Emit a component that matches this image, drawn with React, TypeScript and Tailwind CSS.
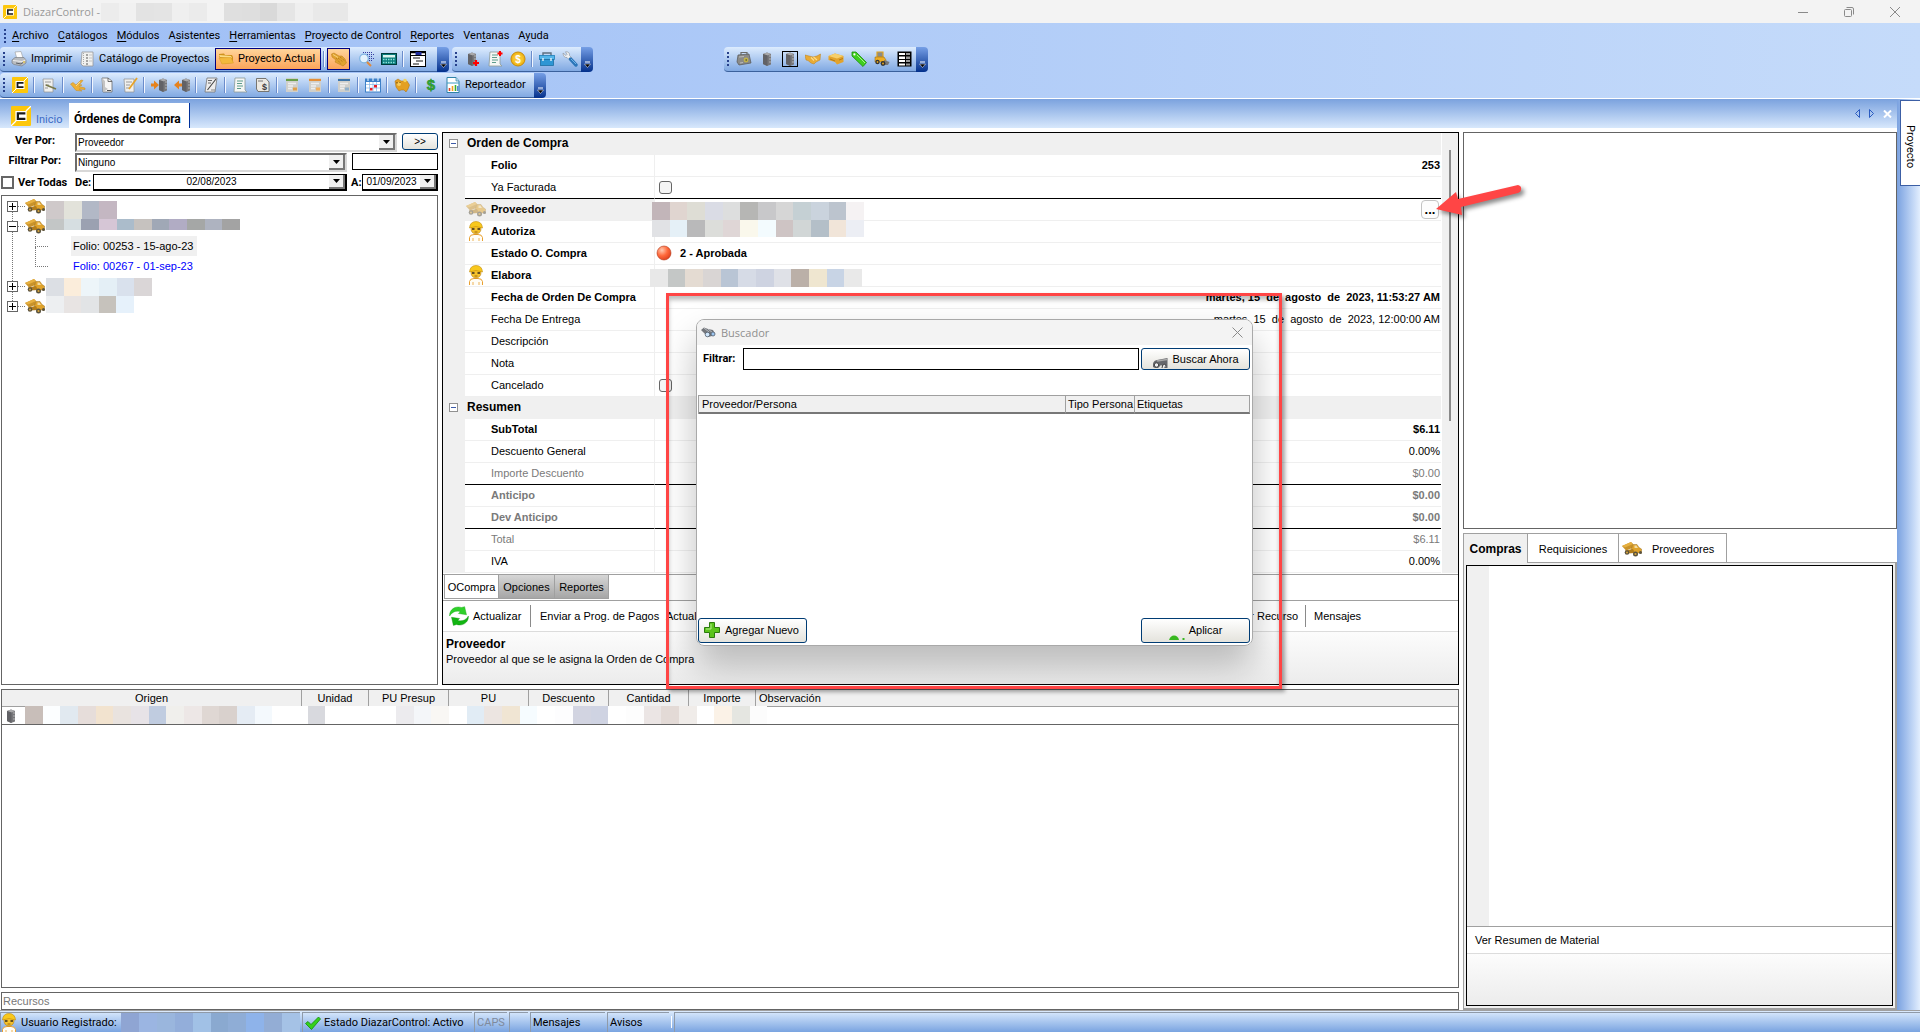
import type { ReactNode } from "react";
import clsx from "clsx";

// ---------- icons ----------

const Svg = ({ size = 16, children }: { size?: number; children: ReactNode }) => (
  <svg width={size} height={size} viewBox="0 0 16 16" className="shrink-0" aria-hidden="true">
    {children}
  </svg>
);

const Logo = ({ size = 16 }: { size?: number }) => (
  <Svg size={size}>
    <rect width="16" height="16" rx="1" fill="#fdc70c" />
    <path d="M0 16 L4 12 M12 4 L16 0" stroke="#fff" strokeWidth="1" />
    <rect x="3.5" y="4" width="9" height="8" fill="#fff" />
    <path d="M11.5 5.8 H5.5 V10.2 H11.5" fill="none" stroke="#1a1a1a" strokeWidth="1.8" />
  </Svg>
);

const Printer = () => (
  <Svg>
    <path d="M4 1 L10 0.5 L12 7 L6 8 Z" fill="#fdfdfd" stroke="#999" strokeWidth="0.6" />
    <path d="M1 9 L4 6.5 L13 6.5 L15 9 V12 L11 15 L3 13.5 L1 12 Z" fill="#b9bcc0" stroke="#7b7f85" strokeWidth="0.7" />
    <path d="M2 9.5 L11 10.5 L14.5 9" stroke="#eee" fill="none" />
    <path d="M5 12 L10 13 L12 11.5" stroke="#5d6167" fill="none" />
    <circle cx="13" cy="11" r="0.9" fill="#e8c64a" />
  </Svg>
);

const Notebook = () => (
  <Svg>
    <path d="M3 1 H14 V15 H4 L2 13 Z" fill="#f1f1ef" stroke="#98989a" strokeWidth="0.8" />
    <path d="M4.5 2 V14" stroke="#aaa" strokeDasharray="1 1" />
    <path d="M7 4 H9 M7 7 H9 M7 10 H9 M7 13 H9" stroke="#8a8a8a" strokeWidth="1.3" />
    <path d="M10 4 H13 M10 7 H13 M10 10 H13" stroke="#c3c3c3" />
  </Svg>
);

const Folder = () => (
  <Svg>
    <path d="M1 3 L6 2.5 L7 4 L14 4 L15 6 V12 L4 13 L1 5 Z" fill="#d0921d" />
    <path d="M1 4 L13 5 L14 7 L2 6 Z" fill="#fbdc84" />
    <path d="M1 7 L13 6.5 L15.5 12 L4 13 Z" fill="#f3b93c" stroke="#dd9f2b" strokeWidth="0.5" />
  </Svg>
);

const Glove = () => (
  <Svg>
    <path d="M0.5 3 L3 2 L8 5 L11 5 L14 8 L15.5 12 L12 15 L8 13 L4 11 L5 9 L1 6 Z" fill="#e0a230" stroke="#b77a16" strokeWidth="0.5" />
    <path d="M7 7 L12 11 M9 6 L14 10 M5 7 L10 13" stroke="#a96f14" strokeWidth="0.9" strokeDasharray="1 1" />
    <path d="M2 3.5 L7 6.5" stroke="#f8d27c" strokeWidth="1" />
  </Svg>
);

const Finder = () => (
  <Svg>
    <path d="M5 1.5 H15 M7 3.5 H16 M9 5.5 H15 M11 7.5 H16 M11 9.5 H14" stroke="#343aa0" strokeWidth="1.1" strokeDasharray="1 1" />
    <circle cx="6" cy="7.5" r="4.3" fill="#e4f2fd" stroke="#7fb4e2" strokeWidth="1.2" />
    <path d="M9 11 L13 15" stroke="#e08a3c" strokeWidth="2" />
  </Svg>
);

const Calc = () => (
  <Svg>
    <rect x="0.5" y="2.5" width="15" height="11" fill="#0a7d7d" stroke="#003c3c" />
    <rect x="2" y="4" width="12" height="2.5" fill="#d9f5ee" />
    <path d="M2 8.5 H14 M2 11.5 H14" stroke="#8de0d8" strokeWidth="1.4" strokeDasharray="1.5 1" />
  </Svg>
);

const PanelIcon = () => (
  <Svg>
    <rect x="0.5" y="0.5" width="15" height="15" fill="#fff" stroke="#000" />
    <path d="M1 1.500 H15" stroke="#000" strokeWidth="1.5" />
    <rect x="5.500" y="1" width="6" height="3" fill="#1d2a9a" />
    <path d="M0.500 4.500 H15.500" stroke="#000" strokeWidth="1" />
    <path d="M3 7 H10 M6 10 H13 M3 13 H9" stroke="#888" strokeWidth="1.800" />
  </Svg>
);

const rockShape = (
  <>
    <path d="M4 3 L8 1.5 L12 3 V13.5 L8 15 L4 13 Z" fill="#77777a" />
    <path d="M4 3 L8 1.5 L12 3 L8.5 4.5 Z" fill="#a9a9ab" />
    <path d="M4 3 L8.5 4.5 V15 L4 13 Z" fill="#626266" />
    <path d="M10 5 H12 M10 8 H12 M10 11 H12" stroke="#b5b5b5" strokeWidth="1.2" />
  </>
);

const Rock = () => <Svg>{rockShape}</Svg>;

const RockAdd = () => (
  <Svg>
    {rockShape}
    <path d="M12 9 V15 M9 12 H15" stroke="#f00" strokeWidth="2.2" />
  </Svg>
);

const RockBoxed = () => (
  <Svg>
    <rect x="0.5" y="0.5" width="15" height="15" fill="none" stroke="#000" />
    {rockShape}
  </Svg>
);

const RockIn = () => (
  <Svg>
    <g transform="translate(4 0)">{rockShape}</g>
    <path d="M0 6.5 H3 V3.5 L8 8 L3 12.5 V9.5 H0 Z" fill="#e5821e" />
  </Svg>
);

const RockOut = () => (
  <Svg>
    <g transform="translate(4 0)">{rockShape}</g>
    <path d="M8 6.5 H5 V3.5 L0 8 L5 12.5 V9.5 H8 Z" fill="#e5821e" />
  </Svg>
);

const Receipt = ({ mark }: { mark?: boolean }) => (
  <Svg>
    <path d="M3 1 H13 V13 L15 15 H2 Z" fill="#f5f6f4" stroke="#8d9a98" strokeWidth="0.8" />
    <path d="M5 4 H11 M5 6.5 H10 M5 9 H11 M5 11.5 H9" stroke="#5d9c8c" />
    {mark && <path d="M13 0 V5 M10.5 2.5 H15.5" stroke="#f00" strokeWidth="2" />}
  </Svg>
);

const Coin = () => (
  <Svg>
    <circle cx="8" cy="8" r="7" fill="#f2b91b" stroke="#c98a07" />
    <circle cx="8" cy="8" r="5" fill="#f7c530" />
    <text x="8" y="11.5" textAnchor="middle" fontSize="10" fontWeight="700" fill="#fff" fontFamily="Liberation Sans, sans-serif">$</text>
  </Svg>
);

const Toolbox = () => (
  <Svg>
    <path d="M4 5 V2 H12 V5" fill="none" stroke="#5d6f80" strokeWidth="1.4" />
    <rect x="0.5" y="4.5" width="15" height="4" fill="#54b5ea" stroke="#1f7fb8" strokeWidth="0.8" />
    <rect x="1.5" y="8.5" width="13" height="6" fill="#2e96d4" stroke="#1f6fa3" strokeWidth="0.8" />
    <path d="M4 7 V10 M12 7 V10" stroke="#e4f3fb" strokeWidth="1.4" />
  </Svg>
);

const Wrench = () => (
  <Svg>
    <path d="M1 2 L4 4.5 L5 3.5 L3.5 0.8 C6 0.3 8 2 7.5 4.5 L10 7 L7.5 9 L5 6.5 C3 7 1 5 1 2 Z" fill="#eef0f2" stroke="#8a8f96" strokeWidth="0.6" />
    <path d="M8.5 8 L14 14" stroke="#2b76b9" strokeWidth="3.4" strokeLinecap="round" />
    <path d="M9 8 L14 13" stroke="#71b2e6" strokeWidth="1" />
  </Svg>
);

const Bag = () => (
  <Svg>
    <path d="M5 4 V1.5 H11 V4" fill="none" stroke="#6b6b68" strokeWidth="1.2" />
    <path d="M2 4 L13 3 L15 12 L3 14 L1 11 Z" fill="#8b8b87" stroke="#555" strokeWidth="0.7" />
    <path d="M3 6 L8 5.5 M4 12 L7 11.5" stroke="#bbb" />
    <circle cx="10" cy="9" r="2.4" fill="#c2b34a" />
    <path d="M9.5 9 H11" stroke="#333" />
  </Svg>
);

const Handshake = () => (
  <Svg>
    <path d="M0 4 L4 5 L8 6 L12 5 L15.5 3 L15 9 L11 11 L9 13 L6 12 L3 9.5 L1 9 Z" fill="#e9ab35" stroke="#bd7f18" strokeWidth="0.5" />
    <path d="M6 6.5 L9 9.5 M8.5 6 L12 9" stroke="#fbdc8c" strokeWidth="1.1" />
  </Svg>
);

const Box = () => (
  <Svg>
    <path d="M0.5 5 L7 2.5 L15.5 5 V11 L9 13.5 L7 11 L0.5 9 Z" fill="#e3a32c" />
    <path d="M0.5 5 L7 2.5 L15.5 5 L9 7.5 Z" fill="#f6cf6c" />
    <path d="M2 8 L7 10 M11 9 L15 7.5" stroke="#a96f10" strokeWidth="0.8" />
  </Svg>
);

const Tag = () => (
  <Svg>
    <path d="M1 1 H5 L15.5 11.5 L12 15.5 L1 5 Z" fill="#3fcf1f" stroke="#1c8a0c" strokeWidth="0.8" />
    <circle cx="3.4" cy="3.4" r="1.1" fill="#fff" />
    <path d="M6 4 L14 12" stroke="#a7f28f" />
  </Svg>
);

const Loader = () => (
  <Svg>
    <path d="M3 1 H9 V6 H3 Z" fill="#8b8b86" stroke="#e2a41e" strokeWidth="1.2" />
    <path d="M1 6 H10 L12 9 V11 H1 Z" fill="#eead23" stroke="#8f6510" strokeWidth="0.5" />
    <path d="M10 9 L15.5 11 L14 14 H10" fill="#777" />
    <circle cx="3.5" cy="11" r="2.2" fill="#333" />
    <circle cx="3.5" cy="11" r="0.9" fill="#e2a41e" />
    <circle cx="9" cy="12.5" r="2.4" fill="#333" />
    <circle cx="9" cy="12.5" r="1" fill="#e2a41e" />
  </Svg>
);

const Sheet = () => (
  <Svg>
    <rect x="0.5" y="0.5" width="14" height="15" fill="#000" />
    <path d="M2 2 H8 V4 H2 Z M2 5.5 H8 V8 H2 Z M2 9 H8 V11 H2 Z M2 12.5 H8 V14.5 H2 Z" fill="#fff" />
    <path d="M9 2 H13 V4 H9 Z M9 5.5 H13 V8 H9 Z M9 9 H13 V11 H9 Z M9 12.5 H13 V14.5 H9 Z" fill="#999" />
  </Svg>
);

const NotePencil = ({ gold }: { gold?: boolean }) => (
  <Svg>
    <path d="M2 2 H12 V15 H3 Z" fill="#f0f0ee" stroke="#8f8f8f" strokeWidth="0.7" />
    <path d="M4 5 H10 M4 8 H8 M4 11 H7" stroke="#9a9a9a" />
    <path d={gold ? "M15 1 L7 12" : "M5 8 L15 12"} stroke={gold ? "#e5a32a" : "#77784a"} strokeWidth="1.8" />
  </Svg>
);

const Hand = () => (
  <Svg>
    <path d="M0.500 7 L3 5.500 L6 8 L11 3 L13 3.500 L9.500 7.500 L12 8 L9 9.500 L15 11 L15 12.500 L9 12 L12 14 L6 13.500 L4 11 Z" fill="#eeb036" stroke="#c98a1c" strokeWidth="0.500" />
    <path d="M6 9 L10 5" stroke="#fbdc8c" />
  </Svg>
);

const Page = () => (
  <Svg>
    <path d="M3 1 H9 L13 4 V15 H4 Z" fill="#f6f6f6" stroke="#6c6c6c" strokeWidth="0.8" />
    <path d="M3 1 L6 4 V10 L9 12 L4 15 Z" fill="#c4c4c4" />
    <path d="M9 1 V4.500 H13" stroke="#555" strokeWidth="0.800" fill="none" />
    <path d="M8 13.500 H12" stroke="#555" />
  </Svg>
);

const Pad = () => (
  <Svg>
    <path d="M4 1 H14 L12 15 H2 Z" fill="#ececec" stroke="#777" strokeWidth="0.8" />
    <path d="M5 3.5 H9 M5 6 H8" stroke="#666" />
    <path d="M13 2 L6 11 L4.5 13" stroke="#444" strokeWidth="1.1" fill="none" />
    <path d="M8 13 H12" stroke="#888" />
  </Svg>
);

const Invoice = () => (
  <Svg>
    <path d="M1.5 1.5 H11 L14 5 V14.5 H3 L1.5 12 Z" fill="#ece9e2" stroke="#6d6a63" strokeWidth="0.9" />
    <path d="M3 4 H8" stroke="#777" />
    <text x="9.5" y="13" textAnchor="middle" fontSize="9" fontWeight="700" fill="#3c3c3c" fontFamily="Liberation Sans, sans-serif">$</text>
  </Svg>
);

const Report = ({ head, spot }: { head: string; spot: string }) => (
  <Svg>
    <path d="M2 1 H14 V15 H2 Z" fill="#cfcfcb" />
    <path d="M2 3 H14" stroke={head} strokeWidth="1.8" />
    <path d="M4 6.5 H12 M4 9 H9 M4 11.5 H8" stroke="#eee" strokeWidth="1.3" />
    <path d="M9 12 H13" stroke={spot} strokeWidth="3" />
  </Svg>
);

const Calendar = () => (
  <Svg>
    <rect x="0.5" y="2" width="15" height="13" fill="#fff" stroke="#3c80c8" />
    <path d="M1 3.5 H15" stroke="#3c80c8" strokeWidth="3" />
    <path d="M3 0.5 V4 M8 0.5 V4 M13 0.5 V4" stroke="#d8e8f8" strokeWidth="1.2" />
    <path d="M1 7.5 H15 M1 11 H15 M4.5 5 V15 M8 5 V15 M11.5 5 V15" stroke="#86b6e6" strokeWidth="0.7" />
    <path d="M9 8 H12 V10.5 H9 Z M5 11 H7.5 V13.5 H5 Z" fill="#e8202a" />
  </Svg>
);

const Piggy = () => (
  <Svg>
    <path d="M1 4 L4 2 L7 4 L13 4 L15.5 8 L14 12 L12 15 L10 13 L7 13 L5 14 L2 10 Z" fill="#e3a022" stroke="#aa6f0c" strokeWidth="0.5" />
    <circle cx="5" cy="7" r="2" fill="#f6cb5c" />
    <circle cx="11" cy="3.5" r="1.8" fill="#f4d25a" />
    <path d="M3 5 V6.5 M6 5 V6" stroke="#6d4505" />
  </Svg>
);

const Dollar = () => (
  <Svg>
    <text x="8" y="13" textAnchor="middle" fontSize="15" fontWeight="700" fill="#34a832" stroke="#1f8a26" strokeWidth="0.5" fontFamily="Liberation Sans, sans-serif">$</text>
  </Svg>
);

const ChartDoc = () => (
  <Svg>
    <path d="M2 0.5 H11 L14 4 V15.5 H2 Z" fill="#fff" stroke="#2f83a8" />
    <path d="M11 0.5 V4 H14" fill="#bfe0ee" stroke="#2f83a8" strokeWidth="0.7" />
    <path d="M2 6 H14" stroke="#3a9ac4" />
    <path d="M4.5 11 V14" stroke="#e04020" strokeWidth="1.6" />
    <path d="M7.500 9 V14" stroke="#f0a020" strokeWidth="1.6" />
    <path d="M10.500 8 V14" stroke="#36b030" strokeWidth="1.6" />
    <path d="M12.800 9 V14" stroke="#3070d0" strokeWidth="1.2" />
  </Svg>
);

const Truck = ({ faded }: { faded?: boolean }) => (
  <svg width="20" height="16" viewBox="0 0 20 16" className={clsx("shrink-0", faded && "opacity-50")} aria-hidden="true">
    <path d="M0 5 L9 1 L11 3 L10.5 7 L4 9.5 Z" fill="#c8922a" />
    <path d="M0 5 L9 1 L11 3 L3 6.5 Z" fill="#e6b040" />
    <path d="M11 3.5 H15 L17 6.5 L19.5 8 V12 H12 L9 9 Z" fill="#e0a32a" stroke="#8a5f10" strokeWidth="0.4" />
    <path d="M12.5 4.5 H14.5 L16 7 H12.5 Z" fill="#f4dca0" />
    <path d="M3 9.5 L11 8 L13 12 L5 12.5 Z" fill="#b27d1c" />
    <circle cx="5" cy="11.5" r="2.3" fill="#5a523e" />
    <circle cx="5" cy="11.5" r="1" fill="#d9a63c" />
    <circle cx="13.5" cy="13" r="2.5" fill="#5a523e" />
    <circle cx="13.5" cy="13" r="1.1" fill="#d9a63c" />
    <circle cx="18.5" cy="11.5" r="1.5" fill="#5a523e" />
  </svg>
);

const Worker = () => (
  <svg width="16" height="20" viewBox="0 0 16 20" className="shrink-0" aria-hidden="true">
    <path d="M1.5 20 V16.5 Q2 13.5 6 13.5 H10 Q14 13.5 14.5 16.5 V20" fill="#fffdf6" stroke="#e9a030" strokeWidth="1" />
    <path d="M5 17 V20 M11 17 V20" stroke="#e9a030" strokeWidth="0.8" />
    <circle cx="8" cy="8" r="5" fill="#f5c22c" stroke="#a86f08" strokeWidth="0.5" />
    <path d="M1.5 7 Q2 0.5 8 0.5 Q14 0.5 14.5 7 L8 5.5 Z" fill="#f8c81d" stroke="#c28c08" strokeWidth="0.6" />
    <path d="M4 8 H6.5 M9.5 8 H12" stroke="#33281c" strokeWidth="1.4" />
    <path d="M6.5 11 H9.5" stroke="#8a5208" strokeWidth="0.8" />
  </svg>
);

const Ball = () => (
  <Svg>
    <defs>
      <radialGradient id="ball" cx="0.35" cy="0.3" r="0.8">
        <stop offset="0" stopColor="#ffc9b0" />
        <stop offset="0.5" stopColor="#ff6a3c" />
        <stop offset="1" stopColor="#d93a18" />
      </radialGradient>
    </defs>
    <circle cx="8" cy="8" r="7" fill="url(#ball)" stroke="#b23a1c" strokeWidth="0.6" />
  </Svg>
);

const Refresh = () => (
  <Svg size={20}>
    <path d="M0.500 8 C0 3 5 -0.500 10 1.200 L12.500 0.500 L14 7 L7.500 6 L9 4.500 C6 3.500 2.500 4.500 0.500 8 Z" fill="#2fd02a" stroke="#12a512" strokeWidth="0.3" />
    <path d="M15.500 8 C16 13 11 16.500 6 14.800 L3.500 15.500 L2 9 L8.500 10 L7 11.500 C10 12.500 13.500 11.500 15.500 8 Z" fill="#12b512" stroke="#0a8a0a" strokeWidth="0.3" />
  </Svg>
);

const GreenPlus = () => (
  <Svg>
    <path d="M5.5 0.5 H10.5 V5.5 H15.5 V10.5 H10.5 V15.5 H5.5 V10.5 H0.5 V5.5 H5.5 Z" fill="#5cc41c" stroke="#2b7a0c" />
    <path d="M7 2 V7 H2" stroke="#b5ee8a" fill="none" />
  </Svg>
);

const Check = () => (
  <Svg>
    <path d="M0.5 8.5 L3 6.5 L6 9.5 L13.5 2 L15.5 4 L6.5 14.5 Z" fill="#35d11c" stroke="#128a0c" strokeWidth="0.8" />
  </Svg>
);

const Binoculars = () => (
  <Svg>
    <path d="M1 5 L4 2.5 L8 4 L13 5 L15 9 L12 11 L8 12 L5 9 Z" fill="#74777c" />
    <path d="M4 3 L9 7 M8 4 L13 8" stroke="#b8bcc2" />
    <circle cx="7.5" cy="9.5" r="2.3" fill="#cfe6fb" stroke="#54606e" strokeWidth="0.8" />
    <circle cx="13" cy="9" r="2" fill="#9cc6f0" stroke="#54606e" strokeWidth="0.8" />
  </Svg>
);

const BinocularsHalf = () => (
  <svg width="16" height="11" viewBox="0 0 16 11" className="shrink-0 self-end" aria-hidden="true">
    <path d="M1 10 Q0 4 5 3 L15.5 1 V11 H13 L9 8 L6 11 H3 Z" fill="#66686c" />
    <path d="M5 4 L15 2.5" stroke="#aaa" strokeWidth="1.5" />
    <circle cx="4.5" cy="8" r="2.2" fill="#eee" stroke="#444" />
    <path d="M10 11 Q10 7 13 7 L14 9" fill="#eee" stroke="#444" />
  </svg>
);

const ApplyTip = () => (
  <svg width="16" height="5" viewBox="0 0 16 5" className="shrink-0 self-end" aria-hidden="true">
    <path d="M0 5 Q1.5 0.5 5 0.5 Q9 0.5 10 5 Z" fill="#38b820" />
    <path d="M13.5 5 V3 H15.5 V5 Z" fill="#38b820" />
  </svg>
);

// ---------- small parts ----------

const Mosaic = ({ colors, className }: { colors: string[]; className: string }) => (
  <div className={clsx("flex", className)}>
    {colors.map((color, idx) => (
      <div key={idx} className="flex-1" style={{ backgroundColor: color }} />
    ))}
  </div>
);

const Grip = () => (
  <span className="flex w-2 shrink-0 flex-col items-center justify-center gap-[2px]">
    {[0, 1, 2, 3].map((dot) => (
      <span key={dot} className="h-[2px] w-[2px] bg-[#27418c]" />
    ))}
  </span>
);

const Sep = () => (
  <span className="flex w-[6px] shrink-0 items-center justify-center">
    <span className="h-4 w-px bg-[#6a8ccb]" />
    <span className="h-4 w-px bg-[#f1f6ff]" />
  </span>
);

const Tool = ({ label, children }: { label: string; children: ReactNode }) => (
  <button type="button" aria-label={label} className="flex w-[23px] shrink-0 items-center justify-center">
    {children}
  </button>
);

const EndCap = () => (
  <span className="flex w-3 shrink-0 items-end justify-center rounded-r-sm bg-linear-to-b from-[#769fe6] to-[#03308c] pb-1">
    <svg width="7" height="7" viewBox="0 0 7 7" aria-hidden="true">
      <path d="M1 1 H6" stroke="#fff" strokeWidth="1" />
      <path d="M0.5 3 H6.5 L3.5 6.5 Z" fill="#000" stroke="#fff" strokeWidth="0.5" />
    </svg>
  </span>
);

const Bar = ({ className, children }: { className?: string; children: ReactNode }) => (
  <div className={clsx("flex h-[25px] shrink-0 rounded-sm", className)}>
    <div className="flex rounded-l-sm border-b border-[#3b619c] bg-linear-to-b from-[#ddecfe] to-[#81a9e2]">{children}</div>
    <EndCap />
  </div>
);

const Chevron = () => (
  <svg width="7" height="4" viewBox="0 0 7 4" aria-hidden="true">
    <path d="M0 0 H7 L3.5 4 Z" fill="#000" />
  </svg>
);

type DropProps = { id: string; value: string; flat?: boolean; className: string };

const Drop = ({ id, value, flat, className }: DropProps) => (
  <div
    className={clsx(
      "relative flex bg-white",
      flat ? "h-[17px] border border-r-2 border-b-2 border-black" : "h-[19px] border-2 border-[#6b6b6b] border-r-[#d8d8d8] border-b-[#d8d8d8]",
      className
    )}
  >
    <select
      id={id}
      className={clsx(
        "min-w-0 flex-1 appearance-none bg-transparent font-['Liberation_Sans',sans-serif] text-[10px] leading-none font-normal outline-none",
        flat ? "pr-4 text-center" : "px-px"
      )}
    >
      <option>{value}</option>
    </select>
    <span className="pointer-events-none absolute inset-y-0 right-0 flex w-4 items-center justify-center border-r-2 border-b-2 border-[#777] bg-[#f0f0f0]">
      <Chevron />
    </span>
  </div>
);

const xpButton =
  "flex items-center rounded-[3px] border border-[#003c74] bg-linear-to-b from-white to-[#e4e3dc] font-['Liberation_Sans',sans-serif]";

// ---------- data ----------

const menus = [
  ["", "A", "rchivo"],
  ["", "C", "atálogos"],
  ["", "M", "ódulos"],
  ["A", "s", "istentes"],
  ["", "H", "erramientas"],
  ["", "P", "royecto de Control"],
  ["", "R", "eportes"],
  ["Ven", "t", "anas"],
  ["A", "y", "uda"],
];

type Prop = {
  label: string;
  value?: string;
  bold?: boolean;
  gray?: boolean;
  rule?: boolean;
  icon?: "truck" | "worker";
  kind?: "check" | "state" | "picker";
};

const orden: Prop[] = [
  { label: "Folio", value: "253", bold: true },
  { label: "Ya Facturada", kind: "check", rule: true },
  { label: "Proveedor", bold: true, icon: "truck", kind: "picker" },
  { label: "Autoriza", bold: true, icon: "worker" },
  { label: "Estado O. Compra", bold: true, kind: "state", value: "2 - Aprobada" },
  { label: "Elabora", bold: true, icon: "worker" },
  { label: "Fecha de Orden De Compra", bold: true, value: "martes, 15  de  agosto  de  2023, 11:53:27 AM" },
  { label: "Fecha De Entrega", value: "martes, 15  de  agosto  de  2023, 12:00:00 AM" },
  { label: "Descripción" },
  { label: "Nota" },
  { label: "Cancelado", kind: "check" },
];

const resumen: Prop[] = [
  { label: "SubTotal", value: "$6.11", bold: true },
  { label: "Descuento General", value: "0.00%" },
  { label: "Importe Descuento", value: "$0.00", gray: true, rule: true },
  { label: "Anticipo", value: "$0.00", bold: true, gray: true },
  { label: "Dev Anticipo", value: "$0.00", bold: true, gray: true, rule: true },
  { label: "Total", value: "$6.11", gray: true },
  { label: "IVA", value: "0.00%" },
];

const GroupRow = ({ title }: { title: string }) => (
  <tr className="h-[22px] bg-[#f0f0f0] align-top">
    <td className="p-0 pt-[6px] pl-[6px]">
      <button type="button" aria-label={"Contraer " + title} className="flex h-[9px] w-[9px] items-center justify-center border border-[#919191] bg-white">
        <span className="h-px w-[5px] bg-[#3c5aa8]" />
      </button>
    </td>
    <th colSpan={2} className="p-0 pt-[2px] pl-[2px] text-left text-[12px] leading-4">
      {title}
    </th>
  </tr>
);

const PropRow = ({ item }: { item: Prop }) => {
  const line = item.rule ? "border-b border-black" : "border-b border-[#efefef]";
  const id = item.label.replace(/[ .]/g, "");
  return (
    <tr className={clsx("h-[22px] align-top", item.bold && "font-bold", item.gray && "text-[#7a7a7a]")}>
      <td className="bg-[#f0f0f0] p-0" />
      <td className={clsx("border-r border-r-[#efefef] p-0", line, item.kind === "picker" && "bg-[#f0f0f0]")}>
        <div className="flex h-5 items-center">
          <span className="flex w-[26px] justify-center pr-1">
            {item.icon === "truck" && <Truck faded />}
            {item.icon === "worker" && <Worker />}
          </span>
          {item.kind === "check" ? <label htmlFor={id}>{item.label}</label> : item.label}
        </div>
      </td>
      <td className={clsx("p-0", line)}>
        <div className="flex h-5 items-center">
          {item.kind === "check" && (
            <input id={id} type="checkbox" className="ml-1 h-[13px] w-[13px] appearance-none rounded-[3px] border border-[#666] bg-[#f5f5f5]" />
          )}
          {item.kind === "state" && (
            <span className="flex items-center gap-2 pl-px">
              <Ball />
              {item.value}
            </span>
          )}
          {item.kind === "picker" && (
            <button type="button" className="mr-[2px] ml-auto flex h-[19px] w-[18px] items-center justify-center rounded-[4px] border border-[#c4c4c4] bg-[#fdfdfd] text-[13px] leading-none">
              ...
            </button>
          )}
          {!item.kind && <span className="ml-auto pr-px whitespace-pre">{item.value}</span>}
        </div>
      </td>
    </tr>
  );
};

const columns = [
  { title: "Origen", width: "w-[300px]" },
  { title: "Unidad", width: "w-[67px]" },
  { title: "PU Presup", width: "w-[80px]" },
  { title: "PU", width: "w-[80px]" },
  { title: "Descuento", width: "w-[80px]" },
  { title: "Cantidad", width: "w-[80px]" },
  { title: "Importe", width: "w-[67px]" },
];

// ---------- sections ----------

const TitleBar = () => (
  <header className="flex h-[23px] items-center bg-[#f3f3f3] pl-[3px]">
    <Logo size={14} />
    <h1 className="ml-[6px] w-[78px] font-['Open_Sans',sans-serif] text-[11px] whitespace-nowrap text-[#999]">DiazarControl -</h1>
    <Mosaic
      className="h-[18px] w-[247px] shrink-0"
      colors={["#ececec", "#f1f1f1", "#e3e3e3", "#e4e4e4", "#efefef", "#ebebeb", "#f3f3f3", "#dfdfdf", "#dedede", "#d9d9d9", "#e5e5e5", "#efefef", "#e9e9e9", "#e8e8e8"]}
    />
    <div className="ml-auto flex items-center pr-5 text-[#8a8a8a]">
      <button type="button" aria-label="Minimizar" className="flex w-[46px] justify-center">
        <svg width="10" height="10" viewBox="0 0 10 10"><path d="M0 5.5 H10" stroke="currentColor" /></svg>
      </button>
      <button type="button" aria-label="Restaurar" className="flex w-[46px] justify-center">
        <svg width="10" height="10" viewBox="0 0 10 10" fill="none" stroke="currentColor">
          <rect x="0.5" y="2.5" width="7" height="7" rx="1" />
          <path d="M2.5 0.5 H8 Q9.5 0.5 9.5 2 V7.5" />
        </svg>
      </button>
      <button type="button" aria-label="Cerrar" className="flex w-[28px] justify-end">
        <svg width="10" height="10" viewBox="0 0 10 10"><path d="M0 0 L10 10 M10 0 L0 10" stroke="currentColor" /></svg>
      </button>
    </div>
  </header>
);

const Toolbars = () => (
  <div className="bg-linear-to-r from-[#9ebef5] to-[#c5dbfa]">
    <nav className="flex h-6 items-center pt-px pl-px">
      <span className="flex h-4"><Grip /></span>
      <ul className="flex gap-[9px] pl-[3px]">
        {menus.map(([before, key, after]) => (
          <li key={before + key + after}>
            <a href="#" className="whitespace-nowrap">
              {before}
              <u className="underline-offset-2">{key}</u>
              {after}
            </a>
          </li>
        ))}
      </ul>
    </nav>

    <div className="flex h-[26px] gap-[3px]">
      <Bar>
        <Grip />
        <button type="button" className="flex w-[68px] shrink-0 items-center gap-1 pl-[3px] whitespace-nowrap">
          <Printer />
          Imprimir
        </button>
        <button type="button" className="flex w-[139px] shrink-0 items-center gap-1 pl-[3px] whitespace-nowrap">
          <Notebook />
          Catálogo de Proyectos
        </button>
        <button type="button" className="my-px flex w-[106px] shrink-0 items-center gap-1 border border-[#000080] bg-linear-to-b from-[#ffd59a] to-[#fba45a] pl-[2px] whitespace-nowrap">
          <Folder />
          Proyecto Actual
        </button>
        <Sep />
        <button type="button" aria-label="Herramientas de obra" className="my-px flex w-[23px] items-center justify-center border border-[#000080] bg-linear-to-b from-[#ffd59a] to-[#fba45a]">
          <Glove />
        </button>
        <span className="w-1" />
        <Tool label="Buscar"><Finder /></Tool>
        <Tool label="Calculadora"><Calc /></Tool>
        <Sep />
        <Tool label="Ventana"><PanelIcon /></Tool>
        <span className="w-2" />
      </Bar>
      <Bar>
        <Grip />
        <Tool label="Nuevo material"><RockAdd /></Tool>
        <Tool label="Nueva nota"><Receipt mark /></Tool>
        <Tool label="Costos"><Coin /></Tool>
        <Sep />
        <Tool label="Equipo"><Toolbox /></Tool>
        <Tool label="Ajustes"><Wrench /></Tool>
      </Bar>
      <Bar className="ml-32">
        <Grip />
        <Tool label="Maletín"><Bag /></Tool>
        <Tool label="Material"><Rock /></Tool>
        <Tool label="Material en cuadro"><RockBoxed /></Tool>
        <Tool label="Contratos"><Handshake /></Tool>
        <Tool label="Almacén"><Box /></Tool>
        <Tool label="Etiquetas"><Tag /></Tool>
        <Tool label="Maquinaria"><Loader /></Tool>
        <Tool label="Tabla"><Sheet /></Tool>
      </Bar>
    </div>

    <div className="flex h-[25px]">
      <Bar>
        <Grip />
        <Tool label="Inicio"><Logo /></Tool>
        <Sep />
        <Tool label="Presupuesto"><NotePencil /></Tool>
        <Sep />
        <Tool label="Solicitudes"><Hand /></Tool>
        <Sep />
        <Tool label="Hoja"><Page /></Tool>
        <Tool label="Editar"><NotePencil gold /></Tool>
        <Sep />
        <Tool label="Entradas"><RockIn /></Tool>
        <Tool label="Salidas"><RockOut /></Tool>
        <Sep />
        <Tool label="Bitácora"><Pad /></Tool>
        <Sep />
        <Tool label="Recibo"><Receipt /></Tool>
        <Tool label="Factura"><Invoice /></Tool>
        <Sep />
        <Tool label="Reporte verde"><Report head="#5f9a3c" spot="#e0a04a" /></Tool>
        <Tool label="Reporte naranja"><Report head="#e88a2a" spot="#f0b060" /></Tool>
        <Sep />
        <Tool label="Reporte azul"><Report head="#2f6ea8" spot="#8fb0cc" /></Tool>
        <Sep />
        <Tool label="Calendario"><Calendar /></Tool>
        <Sep />
        <Tool label="Ahorro"><Piggy /></Tool>
        <Sep />
        <Tool label="Pagos"><Dollar /></Tool>
        <button type="button" className="flex w-[92px] shrink-0 items-center gap-1 pl-[3px] whitespace-nowrap">
          <ChartDoc />
          Reporteador
        </button>
      </Bar>
    </div>
  </div>
);

const TabStrip = () => (
  <div className="flex h-[29px] items-end bg-linear-to-b from-[#7ba2de] to-[#d8e8fc]">
    <a href="#" className="flex h-[25px] w-[69px] items-center gap-[5px] pl-[11px] text-[#3c6bc6]">
      <Logo size={20} />
      <span className="pt-2">Inicio</span>
    </a>
    <a href="#" className="flex h-[25px] items-center border-r border-[#00309a] bg-white pt-[6px] pr-2 pl-[5px] text-[12px] font-bold whitespace-nowrap">
      Órdenes de Compra
    </a>
    <div className="ml-auto flex h-full items-center gap-[9px] pr-[5px]">
      <button type="button" aria-label="Anterior">
        <svg width="5" height="9" viewBox="0 0 5 9"><path d="M4.5 0.5 V8.5 L0.5 4.5 Z" fill="none" stroke="#2a5bc0" /></svg>
      </button>
      <button type="button" aria-label="Siguiente">
        <svg width="5" height="9" viewBox="0 0 5 9"><path d="M0.5 0.5 V8.5 L4.5 4.5 Z" fill="none" stroke="#2a5bc0" /></svg>
      </button>
      <button type="button" aria-label="Cerrar pestaña">
        <svg width="9" height="8" viewBox="0 0 9 8"><path d="M1 0.5 L8 7.5 M8 0.5 L1 7.5" stroke="#fff" strokeWidth="2" /></svg>
      </button>
    </div>
  </div>
);

const Filters = () => (
  <form className="flex flex-col gap-px pb-1 font-bold">
    <div className="flex h-5 items-start pt-px">
      <label htmlFor="verPor" className="w-[75px] pr-5 text-right leading-4">Ver Por:</label>
      <Drop id="verPor" value="Proveedor" className="flex-1" />
      <button type="button" className={clsx(xpButton, "ml-[5px] h-[17px] w-9 justify-center text-[10px] font-normal")}>&gt;&gt;</button>
    </div>
    <div className="flex h-5 items-start">
      <label htmlFor="filtrarPor" className="w-[75px] pr-[14px] text-right leading-4">Filtrar Por:</label>
      <Drop id="filtrarPor" value="Ninguno" className="flex-1" />
      <input aria-label="Filtro" className="ml-[5px] h-[17px] w-[86px] border border-black bg-white outline-none" />
    </div>
    <div className="flex h-[17px] items-center">
      <input id="verTodas" type="checkbox" className="ml-px h-[13px] w-[13px] appearance-none border-2 border-[#666] bg-white" />
      <label htmlFor="verTodas" className="w-[61px] pl-1 whitespace-nowrap">Ver Todas</label>
      <label htmlFor="de" className="w-[18px]">De:</label>
      <Drop id="de" value="02/08/2023" flat className="flex-1" />
      <label htmlFor="a" className="ml-1 w-[11px]">A:</label>
      <Drop id="a" value="01/09/2023" flat className="w-[76px]" />
    </div>
  </form>
);

const Branch = ({ open }: { open?: boolean }) => (
  <li className="flex h-5 items-center pl-[5px]">
    <button type="button" aria-label={open ? "Contraer" : "Expandir"} className="relative flex h-[11px] w-[11px] items-center justify-center border border-[#666] bg-white">
      <span className="h-px w-[7px] bg-black" />
      {!open && <span className="absolute h-[7px] w-px bg-black" />}
    </button>
    <span className="w-[7px] border-b border-dotted border-[#777]" />
    <Truck />
  </li>
);

const Leaf = ({ text, selected }: { text: string; selected?: boolean }) => (
  <li className="flex h-5 items-start pl-[33px]">
    <span className={clsx("w-[13px] border-b border-l border-dotted border-[#777]", selected ? "h-[11px]" : "-mt-[9px] h-5")} />
    <a href="#" className={clsx("ml-[23px] h-5 px-[2px] pr-1 leading-5 whitespace-nowrap", selected ? "bg-[#f0f0f0]" : "text-[#0000ff]")}>
      {text}
    </a>
  </li>
);

const Tree = () => (
  <div className="relative ml-px flex-1 border border-[#646464] bg-white font-['Liberation_Sans',sans-serif]">
    <ul>
      <Branch />
      <Branch open />
      <Leaf text="Folio: 00253 - 15-ago-23" selected />
      <Leaf text="Folio: 00267 - 01-sep-23" />
      <Branch />
      <Branch />
    </ul>
    <span className="absolute top-4 left-[10px] h-[9px] border-l border-dotted border-[#777]" />
    <span className="absolute top-9 left-[10px] h-[49px] border-l border-dotted border-[#777]" />
    <span className="absolute top-[96px] left-[10px] h-[9px] border-l border-dotted border-[#777]" />
    <Mosaic className="absolute top-[5px] left-11 h-[18px] w-[71px]" colors={["#cfc9ca", "#e2e2da", "#b2b8c6", "#c4b7c2"]} />
    <Mosaic
      className="absolute top-[23px] left-11 h-[11px] w-[194px]"
      colors={["#c3c6c6", "#d6dee1", "#9ba1b1", "#d6c6d6", "#abbccb", "#c6c2bf", "#a0a8b6", "#b1acc4", "#a5a7a6", "#aeb3c0", "#a3a3a3"]}
    />
    <Mosaic className="absolute top-[82px] left-11 h-[18px] w-[106px]" colors={["#dcdfe4", "#fbeddb", "#edf5f9", "#e4eff6", "#d9e1ed", "#dad6d7"]} />
    <Mosaic className="absolute top-[100px] left-11 h-[17px] w-[88px]" colors={["#edeff1", "#e8e4e3", "#e2e4e6", "#c6c2bc", "#e6f1fb"]} />
  </div>
);

const PropertyPanel = () => (
  <section className="relative flex min-w-0 flex-1 flex-col border border-black bg-white font-['Liberation_Sans',sans-serif]">
    <div className="flex pb-px">
      <table className="flex-1 table-fixed border-separate border-spacing-0">
        <colgroup>
          <col className="w-[22px]" />
          <col className="w-[190px]" />
          <col />
        </colgroup>
        <tbody>
          <GroupRow title="Orden de Compra" />
          {orden.map((item) => (
            <PropRow key={item.label} item={item} />
          ))}
          <GroupRow title="Resumen" />
          {resumen.map((item) => (
            <PropRow key={item.label} item={item} />
          ))}
        </tbody>
      </table>
      <div className="ml-px flex w-4 justify-center bg-[#f0f0f0]">
        <span className="mt-[17px] h-[271px] w-[2px] bg-[#8a8a8a]" />
      </div>
    </div>

    <div className="flex h-[27px] items-start border-t border-b border-[#a0a0a0] bg-white pl-px">
      <button type="button" className="h-6 w-[55px] border border-t-0 border-[#a0a0a0]">OCompra</button>
      <button type="button" className="h-6 w-[56px] border-r border-b border-[#a0a0a0] bg-linear-to-b from-[#d6d6d6] to-[#a6a6a6]">Opciones</button>
      <button type="button" className="h-6 w-[54px] border-r border-b border-[#a0a0a0] bg-linear-to-b from-[#d6d6d6] to-[#a6a6a6]">Reportes</button>
    </div>

    <div className="flex h-[31px] items-center border-b border-[#dcdcdc] whitespace-nowrap">
      <button type="button" className="flex w-[87px] items-center gap-1 pl-[6px]">
        <Refresh />
        Actualizar
      </button>
      <span className="h-[22px] w-px bg-[#8a8a8a]" />
      <button type="button" className="w-[135px] pl-[9px] text-left">Enviar a Prog. de Pagos</button>
      <span className="flex w-[632px] justify-between">
        <button type="button">Actualizar Precios</button>
        <button type="button">Agregar Recurso</button>
      </span>
      <span className="ml-[7px] h-[22px] w-px bg-[#8a8a8a]" />
      <button type="button" className="ml-2">Mensajes</button>
    </div>

    <div className="h-[52px] bg-linear-to-b from-[#fcfcfc] to-[#ececec] px-[3px] pt-1">
      <h2 className="text-[12px] leading-4 font-bold">Proveedor</h2>
      <p className="leading-[14px]">Proveedor al que se le asigna la Orden de Compra</p>
    </div>

    {/* masked names */}
    <Mosaic
      className="absolute top-[69px] left-[209px] h-[18px] w-[212px]"
      colors={["#c2b5b9", "#e0d5d0", "#deddd5", "#dadce5", "#dddede", "#b6b6b4", "#c8c8ca", "#d6d6d6", "#c5d0d4", "#cad3dd", "#bcc4ce", "#f5f2f3"]}
    />
    <Mosaic
      className="absolute top-[87px] left-[209px] h-[17px] w-[212px]"
      colors={["#e1e2e5", "#e5f0f7", "#b9b9ba", "#dcddda", "#dfd6d6", "#faf8ec", "#f3fbfe", "#cec4c4", "#d1d6d6", "#b4bfc8", "#f1e5d9", "#eceef4"]}
    />
    <Mosaic
      className="absolute top-[136px] left-[207px] h-[18px] w-[212px]"
      colors={["#e8e8e8", "#c4c7c6", "#e4dbd2", "#d9d5d4", "#b9c5d5", "#d6dbe6", "#ced3e1", "#dfe1e7", "#bbb0a8", "#efe6d0", "#c8d4e5", "#e9e9e9"]}
    />
  </section>
);

const ItemsGrid = () => (
  <div className="relative ml-px flex-1 border border-[#646464] bg-white font-['Liberation_Sans',sans-serif]">
    <table className="w-full table-fixed border-separate border-spacing-0">
      <thead>
        <tr className="h-[17px] bg-[#f0f0f0]">
          {columns.map((col) => (
            <th key={col.title} className={clsx("border-r border-b border-[#a0a0a0] p-0 text-center leading-4 font-normal", col.width)}>
              {col.title}
            </th>
          ))}
          <th className="border-b border-[#a0a0a0] p-0 pl-[3px] text-left leading-4 font-normal">Observación</th>
        </tr>
      </thead>
      <tbody>
        <tr className="h-[18px]">
          <td colSpan={8} className="border-b border-[#646464] p-0 pl-px">
            <Rock />
          </td>
        </tr>
      </tbody>
    </table>
    <Mosaic
      className="absolute top-4 left-[23px] h-[18px] w-[742px]"
      colors={[
        "#c8beb9", "#fcfeff", "#e1e9f0", "#e6ddda", "#f2e3cf", "#e9e3df", "#e7e3e7", "#c0cce0", "#f0efec", "#ede7e6", "#dfd7d3", "#d9d1cd", "#e5ecf4", "#f4f9fd",
        "#ffffff", "#ffffff", "#d8d9de", "#ffffff", "#ffffff", "#ffffff", "#ffffff", "#ecebee", "#f4f6f9", "#f9f7f4", "#ffffff", "#e1ecf5", "#ece5e1", "#f0e5d3",
        "#f6fcff", "#ffffff", "#fdfdfe", "#d2d4e1", "#cfd3e2", "#ffffff", "#fdfdfd", "#ebe5e4", "#e3dad6", "#f0ece9", "#ffffff", "#fbf2e7", "#e5e6e1", "#fcfcfc",
      ]}
    />
  </div>
);

const SidePanel = () => (
  <aside className="flex w-[434px] shrink-0 flex-col bg-white font-['Liberation_Sans',sans-serif]">
    <div className="h-[397px] border border-[#646464]" />
    <div className="mt-1 flex h-[30px]">
      <button type="button" className="w-16 border-t border-l border-[#a0a0a0] bg-[#f0f0f0] pt-px text-[12px] font-bold">Compras</button>
      <button type="button" className="w-[91px] border-t border-b border-l border-[#a0a0a0] pt-px">Requisiciones</button>
      <button type="button" className="flex w-[109px] items-center gap-[10px] border border-[#a0a0a0] pt-px pl-[3px]">
        <Truck />
        Proveedores
      </button>
      <span className="flex-1 border-b border-[#a0a0a0]" />
    </div>
    <div className="flex flex-1 flex-col border-r-2 border-b-2 border-l border-[#a0a0a0] bg-[#f0f0f0] p-[2px]">
      <div className="flex flex-1 flex-col border border-black bg-white">
        <div className="w-[22px] flex-1 bg-[#f0f0f0]" />
        <div className="flex h-7 items-center border-t border-b border-t-[#a0a0a0] border-b-[#dcdcdc] pl-2">
          <a href="#">Ver Resumen de Material</a>
        </div>
        <div className="h-[51px] bg-linear-to-b from-[#fcfcfc] to-[#ececec]" />
      </div>
    </div>
  </aside>
);

const statusCell = "flex h-full shrink-0 items-center border-t border-l border-[#8f9aa8] whitespace-nowrap";

const StatusBar = () => (
  <footer className="flex h-[22px] gap-[2px] border-t border-[#a0a0a0] bg-linear-to-b from-[#dcebfd] to-[#7aa4e0] pt-px">
    <div className={clsx(statusCell, "w-[300px] gap-1 overflow-hidden")}>
      <Worker />
      <span className="w-[96px]">Usuario Registrado:</span>
      <Mosaic className="h-full flex-1" colors={["#8fa5d3", "#9bb5e2", "#9ab6dd", "#93aeda", "#a1c1e6", "#8aa9d0", "#8fadd6", "#8eb3ea", "#93add5", "#a5c2e6"]} />
    </div>
    <div className={clsx(statusCell, "w-[170px] gap-[3px] pl-[2px]")}>
      <Check />
      Estado DiazarControl: Activo
    </div>
    <div className={clsx(statusCell, "w-[33px] justify-center text-[#7f8a9c]")}>CAPS</div>
    <div className={clsx(statusCell, "w-[19px]")} />
    <div className={clsx(statusCell, "w-[75px] pl-[2px]")}>Mensajes</div>
    <div className={clsx(statusCell, "w-[62px] pl-[2px]")}>Avisos</div>
    <span className="my-1 w-px bg-white" />
    <div className={clsx(statusCell, "flex-1")} />
  </footer>
);

const Buscador = () => (
  <div role="dialog" aria-label="Buscador" className="flex h-[327px] w-[557px] flex-col overflow-hidden rounded-lg border border-[#a9a9a9] bg-white">
    <div className="flex h-[25px] items-center gap-[5px] bg-[#f3f3f3] pr-[9px] pl-[3px]">
      <Binoculars />
      <h2 className="font-['Open_Sans',sans-serif] text-[11px] text-[#8f8f8f]">Buscador</h2>
      <button type="button" aria-label="Cerrar buscador" className="ml-auto">
        <svg width="11" height="11" viewBox="0 0 11 11"><path d="M0.5 0.5 L10.5 10.5 M10.5 0.5 L0.5 10.5" stroke="#8a8a8a" /></svg>
      </button>
    </div>
    <div className="flex h-[25px] items-center pt-[3px] pr-[2px] pl-[6px]">
      <label htmlFor="filtrar" className="w-10 font-bold">Filtrar:</label>
      <input id="filtrar" className="h-[22px] flex-1 border border-black bg-white px-1 outline-none" />
      <button type="button" className={clsx(xpButton, "ml-[2px] h-[22px] w-[109px] justify-center gap-1 pb-px")}>
        <BinocularsHalf />
        Buscar Ahora
      </button>
    </div>
    <div className="flex-1 px-px pt-[25px]">
      <table className="w-[552px] table-fixed border-separate border-spacing-0 border-t border-l border-[#a0a0a0] bg-[#f0f0f0] font-['Liberation_Sans',sans-serif]">
        <thead>
          <tr className="h-[18px] text-left">
            <th className="w-[367px] border-r border-b-2 border-[#a0a0a0] border-b-[#777] p-0 pl-[3px] leading-4 font-normal">Proveedor/Persona</th>
            <th className="w-[69px] border-r border-b-2 border-[#a0a0a0] border-b-[#777] p-0 pl-[2px] leading-4 font-normal whitespace-nowrap">Tipo Persona</th>
            <th className="border-r border-b-2 border-[#a0a0a0] border-b-[#777] p-0 pl-[2px] leading-4 font-normal">Etiquetas</th>
          </tr>
        </thead>
      </table>
    </div>
    <div className="flex justify-between px-px pr-[2px] pb-[2px]">
      <button type="button" className={clsx(xpButton, "h-[25px] w-[109px] gap-[5px] pb-px pl-[5px]")}>
        <GreenPlus />
        Agregar Nuevo
      </button>
      <button type="button" className={clsx(xpButton, "h-[25px] w-[109px] justify-center gap-1 pb-[2px]")}>
        <ApplyTip />
        Aplicar
      </button>
    </div>
  </div>
);

export default function App() {
  return (
    <div className="relative flex min-h-screen flex-col overflow-hidden bg-white font-['Roboto',sans-serif] text-[11px] leading-4 text-black">
      <TitleBar />
      <Toolbars />
      <div className="flex flex-1 border-t border-white">
        <main className="flex min-w-0 flex-1 flex-col">
          <TabStrip />
          <div className="flex flex-1 gap-1 pt-1">
            <div className="flex min-w-0 flex-1 flex-col gap-1">
              <div className="flex gap-1">
                <div className="flex w-[438px] shrink-0 flex-col">
                  <Filters />
                  <Tree />
                </div>
                <PropertyPanel />
              </div>
              <ItemsGrid />
              <input aria-label="Recursos" placeholder="Recursos" className="ml-px h-[18px] border border-[#646464] bg-white px-px font-['Liberation_Sans',sans-serif] outline-none placeholder:text-[#777]" />
            </div>
            <SidePanel />
          </div>
        </main>
        <div className="flex w-[23px] shrink-0 flex-col bg-linear-to-r from-[#7ba2e0] to-[#e2eefe] pt-px pl-[3px]">
          <button type="button" className="flex h-[86px] items-center justify-center border border-r-0 border-[#3c5fa5] bg-white pt-2 pr-[2px] [writing-mode:vertical-rl]">
            Proyecto
          </button>
        </div>
      </div>
      <StatusBar />

      {/* highlighted search window */}
      <div className="absolute top-[293px] left-[666px] h-[396px] w-[616px] border-3 border-[#ff4545] shadow-[3px_3px_4px_rgba(0,0,0,0.35)]">
        <div className="h-full w-full overflow-hidden pt-[23px] pl-[27px] shadow-[inset_0_4px_4px_rgba(0,0,0,0.25)]">
          <div className="w-[557px] rounded-lg shadow-[0_20px_36px_rgba(0,0,0,0.25)]">
            <Buscador />
          </div>
        </div>
      </div>
      <svg width="92" height="36" viewBox="0 0 92 36" className="absolute top-[184px] left-[1434px] drop-shadow-[3px_3px_2px_rgba(0,0,0,0.45)]" aria-hidden="true">
        <path d="M2 25 L22 8 L24 15 L84 1 Q88 2 87 6 Q87 8 84 9 L27 23 L28 31 Z" fill="#ff4545" />
      </svg>
    </div>
  );
}
